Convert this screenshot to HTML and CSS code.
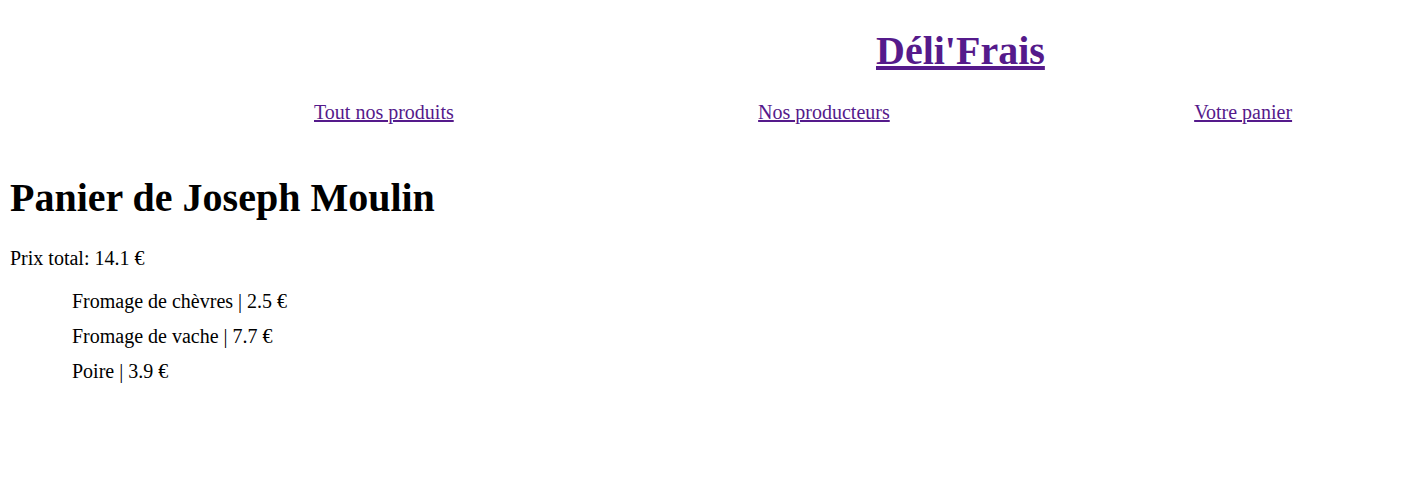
FILE: index.html
```html
<!DOCTYPE html>
<html lang="fr">
<head>
<meta charset="utf-8">
<title>Déli'Frais - Panier</title>
<link rel="stylesheet" href="styles.css">
</head>
<body>
<header class="site-header">
  <h1 class="brand"><a class="brand-link" href="#">Déli'Frais</a></h1>
  <nav class="main-nav">
    <ul class="nav-list">
      <li class="nav-item"><a class="nav-link" href="#">Tout nos produits</a></li>
      <li class="nav-item"><a class="nav-link" href="#">Nos producteurs</a></li>
      <li class="nav-item"><a class="nav-link" href="#">Votre panier</a></li>
    </ul>
  </nav>
</header>
<main class="cart">
  <h1 class="cart-title">Panier de Joseph Moulin</h1>
  <p class="cart-total">Prix total: 14.1 €</p>
  <ul class="cart-items">
    <li class="cart-item">Fromage de chèvres | 2.5 €</li>
    <li class="cart-item">Fromage de vache | 7.7 €</li>
    <li class="cart-item">Poire | 3.9 €</li>
  </ul>
</main>
</body>
</html>
```
FILE: styles.css
```css
html {
  background: #fff;
}

body {
  margin: 0 10px 10px;
  font-family: "Liberation Serif", "Times New Roman", serif;
  font-size: 20px;
  color: #000;
}

.brand {
  font-size: 40px;
  font-weight: bold;
  margin: 26.8px 0;
  padding-left: 866px;
}

.brand-link,
.nav-link {
  color: #551a8b;
  text-decoration: underline;
}

.main-nav {
  margin-bottom: 50px;
}

.nav-list {
  list-style: none;
  margin: 0;
  padding: 0 0 0 304px;
  display: flex;
  gap: 304.4px;
}

.cart-title {
  font-size: 40px;
  font-weight: bold;
  margin: 26.8px 0 26.4px;
}

.cart-total {
  margin: 20px 0;
}

.cart-items {
  list-style: none;
  margin: 20px 0;
  padding-left: 62px;
}

.cart-item {
  margin-bottom: 12px;
}
```
